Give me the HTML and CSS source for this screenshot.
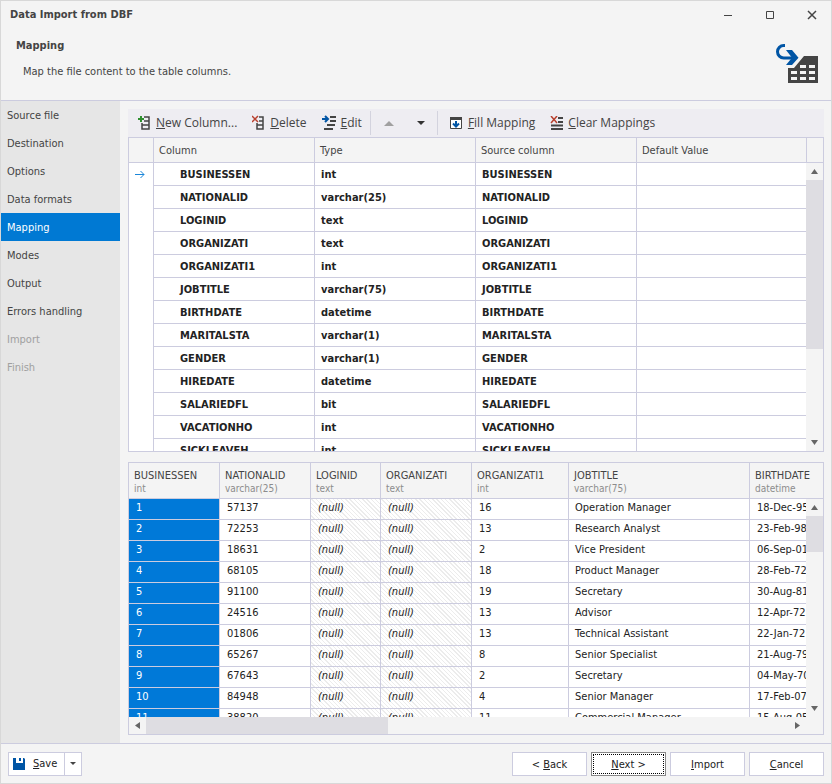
FILE: index.html
```
<!DOCTYPE html>
<html lang="en">
<head>
    <meta charset="UTF-8">
    <meta name="viewport" content="width=device-width, initial-scale=1.0">
    <title>Data Import from DBF</title>
    <link rel="stylesheet" href="styles.css">
</head>
<body>
<div class="window">
    <header class="head">
        <div class="titlebar">
            <h1>Data Import from DBF</h1>
            <div class="win-buttons">
                <button type="button" aria-label="Minimize"><svg width="10" height="10"><path d="M1 5.500h8" stroke="#444" fill="none"/></svg></button>
                <button type="button" aria-label="Maximize"><svg width="10" height="10"><path d="M1.500 1.500h7v7h-7z" stroke="#444" fill="none"/></svg></button>
                <button type="button" aria-label="Close"><svg width="10" height="10"><path d="M1 1l8 8M9 1l-8 8" stroke="#444" stroke-width="1.500" fill="none"/></svg></button>
            </div>
        </div>
        <div class="intro">
            <div class="intro-text">
                <h2>Mapping</h2>
                <p>Map the file content to the table columns.</p>
            </div>
            <svg class="intro-icon" width="42" height="40" viewBox="0 0 42 40">
                <path fill="#444" d="M12 24h6l10-12h14v27H12z"/>
                <path fill="#f4f4f4" d="M24 21h6v3h-6zM33 21h6v3h-6zM15 27h6v3h-6zM24 27h6v3h-6zM33 27h6v3h-6zM15 33h6v3h-6zM24 33h6v3h-6zM33 33h6v3h-6z"/>
                <path fill="none" stroke="#0055a5" stroke-width="3" d="M9 1.500H7.700a6.200 6.200 0 0 0 0 12.400H18"/>
                <path fill="#0055a5" d="M10 6h6l6.500 7.700L16 21h-6l6-7.300z"/>
            </svg>
        </div>
    </header>

    <div class="main">
        <nav class="steps">
            <a href="#">Source file</a>
            <a href="#">Destination</a>
            <a href="#">Options</a>
            <a href="#">Data formats</a>
            <a href="#" class="active">Mapping</a>
            <a href="#">Modes</a>
            <a href="#">Output</a>
            <a href="#">Errors handling</a>
            <a href="#" class="off">Import</a>
            <a href="#" class="off">Finish</a>
        </nav>

        <div class="content">
            <div class="toolbar">
                <button type="button" class="tool">
                    <svg width="13" height="16"><path fill="none" stroke="#444" stroke-width="1.500" d="M6 2h5v12H4V8M4 10h7M6 6h5"/><path stroke="#2f8f2f" stroke-width="2" d="M0 4h6M3 1v6"/></svg>
                    <span><u>N</u>ew Column...</span>
                </button>
                <button type="button" class="tool">
                    <svg width="13" height="16"><path fill="none" stroke="#444" stroke-width="1.500" d="M7 2h4v12H5V8M5 10h6M7 6h4"/><path stroke="#b8402e" stroke-width="1.500" d="M0 1l6 6M6 1L0 7"/></svg>
                    <span><u>D</u>elete</span>
                </button>
                <button type="button" class="tool tool-edit">
                    <svg width="14" height="16"><path stroke="#444" stroke-width="2" d="M8 2h6M8 6h6M5 10h8M2 14h9"/><path fill="none" stroke="#0055a5" stroke-width="2" d="M0 4h6M3 1l3 3-3 3"/></svg>
                    <span><u>E</u>dit</span>
                </button>
                <i class="sep"></i>
                <button type="button" class="tool move" aria-label="Move up" disabled><svg width="10" height="5"><path fill="#a0a0a0" d="M0 5l5-5 5 5z"/></svg></button>
                <button type="button" class="tool move" aria-label="Move down"><svg width="8" height="4"><path fill="#333" d="M0 0h8L4 4z"/></svg></button>
                <i class="sep"></i>
                <button type="button" class="tool tool-fill">
                    <svg width="13" height="14"><path fill="#fff" stroke="#444" d="M.5 1.500h11v11H.5z"/><path fill="#444" d="M0 1h12v3H0z"/><path fill="none" stroke="#0055a5" stroke-width="2" d="M6 5v5M3 7.500l3 3 3-3"/></svg>
                    <span><u>F</u>ill Mapping</span>
                </button>
                <button type="button" class="tool">
                    <svg width="13" height="14"><path stroke="#444" stroke-width="2" d="M8 2h5M8 6h5M1 9.500h12M1 13h12"/><path stroke="#b8402e" stroke-width="1.500" d="M1 0l6 7M7 0L1 7"/></svg>
                    <span><u>C</u>lear Mappings</span>
                </button>
            </div>

            <div class="grid grid-map">
                <table>
                    <colgroup><col class="w25"><col class="w161"><col class="w161"><col class="w161"><col><col class="w16"></colgroup>
                    <thead>
                        <tr><th></th><th>Column</th><th>Type</th><th>Source column</th><th>Default Value</th><th></th></tr>
                    </thead>
                    <tbody>
                        <tr><td><svg width="10" height="9"><path fill="none" stroke="#1a86d9" d="M0 4.500h9M5.500 1l3.500 3.500L5.500 8"/></svg></td><td>BUSINESSEN</td><td>int</td><td>BUSINESSEN</td><td></td><td></td></tr>
                        <tr><td></td><td>NATIONALID</td><td>varchar(25)</td><td>NATIONALID</td><td></td><td></td></tr>
                        <tr><td></td><td>LOGINID</td><td>text</td><td>LOGINID</td><td></td><td></td></tr>
                        <tr><td></td><td>ORGANIZATI</td><td>text</td><td>ORGANIZATI</td><td></td><td></td></tr>
                        <tr><td></td><td>ORGANIZATI1</td><td>int</td><td>ORGANIZATI1</td><td></td><td></td></tr>
                        <tr><td></td><td>JOBTITLE</td><td>varchar(75)</td><td>JOBTITLE</td><td></td><td></td></tr>
                        <tr><td></td><td>BIRTHDATE</td><td>datetime</td><td>BIRTHDATE</td><td></td><td></td></tr>
                        <tr><td></td><td>MARITALSTA</td><td>varchar(1)</td><td>MARITALSTA</td><td></td><td></td></tr>
                        <tr><td></td><td>GENDER</td><td>varchar(1)</td><td>GENDER</td><td></td><td></td></tr>
                        <tr><td></td><td>HIREDATE</td><td>datetime</td><td>HIREDATE</td><td></td><td></td></tr>
                        <tr><td></td><td>SALARIEDFL</td><td>bit</td><td>SALARIEDFL</td><td></td><td></td></tr>
                        <tr><td></td><td>VACATIONHO</td><td>int</td><td>VACATIONHO</td><td></td><td></td></tr>
                        <tr><td></td><td>SICKLEAVEH</td><td>int</td><td>SICKLEAVEH</td><td></td><td></td></tr>
                    </tbody>
                </table>
                <div class="vscroll">
                    <svg width="17" height="17"><path fill="#666" d="M5 11l3.500-5 3.500 5z"/></svg>
                    <div class="track"><div class="thumb"></div></div>
                    <svg width="17" height="17"><path fill="#666" d="M5 6h7l-3.500 5z"/></svg>
                </div>
            </div>

            <div class="grid grid-data">
                <table>
                    <colgroup><col class="w91"><col class="w91"><col class="w70"><col class="w91"><col class="w97"><col class="w181"><col></colgroup>
                    <thead>
                        <tr>
                            <th>BUSINESSEN<small>int</small></th>
                            <th>NATIONALID<small>varchar(25)</small></th>
                            <th>LOGINID<small>text</small></th>
                            <th>ORGANIZATI<small>text</small></th>
                            <th>ORGANIZATI1<small>int</small></th>
                            <th>JOBTITLE<small>varchar(75)</small></th>
                            <th>BIRTHDATE<small>datetime</small></th>
                        </tr>
                    </thead>
                    <tbody>
                        <tr><td>1</td><td>57137</td><td class="null">(null)</td><td class="null">(null)</td><td>16</td><td>Operation Manager</td><td>18-Dec-95</td></tr>
                        <tr><td>2</td><td>72253</td><td class="null">(null)</td><td class="null">(null)</td><td>13</td><td>Research Analyst</td><td>23-Feb-98</td></tr>
                        <tr><td>3</td><td>18631</td><td class="null">(null)</td><td class="null">(null)</td><td>2</td><td>Vice President</td><td>06-Sep-01</td></tr>
                        <tr><td>4</td><td>68105</td><td class="null">(null)</td><td class="null">(null)</td><td>18</td><td>Product Manager</td><td>28-Feb-72</td></tr>
                        <tr><td>5</td><td>91100</td><td class="null">(null)</td><td class="null">(null)</td><td>19</td><td>Secretary</td><td>30-Aug-81</td></tr>
                        <tr><td>6</td><td>24516</td><td class="null">(null)</td><td class="null">(null)</td><td>13</td><td>Advisor</td><td>12-Apr-72</td></tr>
                        <tr><td>7</td><td>01806</td><td class="null">(null)</td><td class="null">(null)</td><td>13</td><td>Technical Assistant</td><td>22-Jan-72</td></tr>
                        <tr><td>8</td><td>65267</td><td class="null">(null)</td><td class="null">(null)</td><td>8</td><td>Senior Specialist</td><td>21-Aug-79</td></tr>
                        <tr><td>9</td><td>67643</td><td class="null">(null)</td><td class="null">(null)</td><td>2</td><td>Secretary</td><td>04-May-70</td></tr>
                        <tr><td>10</td><td>84948</td><td class="null">(null)</td><td class="null">(null)</td><td>4</td><td>Senior Manager</td><td>17-Feb-07</td></tr>
                        <tr><td>11</td><td>38820</td><td class="null">(null)</td><td class="null">(null)</td><td>11</td><td>Commercial Manager</td><td>15-Aug-05</td></tr>
                    </tbody>
                </table>
                <div class="vscroll">
                    <svg width="17" height="17"><path fill="#666" d="M5 11l3.500-5 3.500 5z"/></svg>
                    <div class="track"><div class="thumb"></div></div>
                    <svg width="17" height="17"><path fill="#666" d="M5 6h7l-3.500 5z"/></svg>
                </div>
                <div class="hscroll">
                    <svg width="17" height="17"><path fill="#666" d="M11 5v7L6 8.500z"/></svg>
                    <div class="track"><div class="thumb"></div></div>
                    <svg width="17" height="17"><path fill="#666" d="M6 5v7l5-3.500z"/></svg>
                </div>
            </div>
        </div>
    </div>

    <footer class="foot">
        <div class="save">
            <button type="button" class="save-main">
                <svg width="12" height="12"><path fill="#0055a5" d="M0 0h3v5h7V0h1l1 1v11H0z"/><path fill="#0055a5" d="M6 0h2v3H6z"/></svg>
                <span><u>S</u>ave</span>
            </button>
            <button type="button" class="save-more" aria-label="Save options"><svg width="6" height="3"><path fill="#444" d="M0 0h6L3 3z"/></svg></button>
        </div>
        <div class="actions">
            <button type="button" class="btn">&lt; <u>B</u>ack</button>
            <button type="button" class="btn default"><u>N</u>ext &gt;</button>
            <button type="button" class="btn"><u>I</u>mport</button>
            <button type="button" class="btn"><u>C</u>ancel</button>
        </div>
    </footer>
</div>
</body>
</html>
```

FILE: styles.css
```
*{
    margin: 0;
    padding: 0;
    box-sizing: border-box;
}
body, button{
    font-family: "DejaVu Sans Condensed", "Noto Sans", sans-serif;
    font-size: 11px;
    line-height: 14px;
    color: #444;
}
button{
    background: none;
    border: none;
}
svg{
    display: block;
    flex: none;
}
.window{
    height: 100vh;
    display: flex;
    flex-direction: column;
    background: #f4f4f4;
    border: 1px solid #d8d8d8;
}

/* header */
.head{
    height: 100px;
    flex: none;
    border-bottom: 1px solid #ccccdf;
}
.titlebar{
    display: flex;
    justify-content: space-between;
    align-items: center;
    height: 28px;
    padding: 0 9px;
}
h1, h2{
    font-size: 11px;
    line-height: 14px;
}
.win-buttons{
    display: flex;
    gap: 22px;
}
.win-buttons button{
    width: 20px;
    height: 20px;
    padding: 5px;
}
.intro{
    display: flex;
    justify-content: space-between;
    padding: 10px 13px 0 15px;
}
.intro-text p{
    margin: 12px 0 0 7px;
}
.intro-icon{
    margin-top: 5px;
}

/* steps on the left */
.main{
    flex: 1;
    min-height: 0;
    display: flex;
}
.steps{
    width: 119px;
    flex: none;
    background: #e6e6e6;
}
.steps a{
    display: block;
    height: 28px;
    line-height: 30px;
    padding-left: 6px;
    color: #444;
    text-decoration: none;
}
.steps a.active{
    background: #0079d3;
    color: #fff;
}
.steps a.off{
    color: #a0a0a0;
}

.content{
    flex: 1;
    min-width: 0;
    display: flex;
    flex-direction: column;
    padding: 8px 7px 8px 8px;
}
.toolbar{
    height: 28px;
    flex: none;
    display: flex;
    align-items: center;
    padding-left: 10px;
    background: #eeedf2;
}
.tool{
    display: flex;
    align-items: center;
    gap: 5px;
    margin-right: 15px;
    font-family: "Open Sans", "Noto Sans", sans-serif;
    font-size: 12px;
    line-height: 16px;
    white-space: nowrap;
}
.tool-edit{
    margin-right: 8px;
}
.move{
    width: 32px;
    justify-content: center;
    margin: 0;
}
.sep{
    width: 1px;
    height: 24px;
    margin-right: 2px;
    background: #d3d3de;
}
.sep + .tool-fill{
    margin-left: 10px;
}

/* grids */
.grid{
    position: relative;
    overflow: hidden;
    background: #fff;
    border: 1px solid #ccccdf;
}
.grid-map{
    flex: 315 1 0;
}
.grid-data{
    flex: 273 1 0;
    margin-top: 10px;
}
table{
    width: 100%;
    table-layout: fixed;
    border-spacing: 0;
}
.w16{ width: 16px; }
.w25{ width: 25px; }
.w70{ width: 70px; }
.w91{ width: 91px; }
.w97{ width: 97px; }
.w161{ width: 161px; }
.w181{ width: 181px; }
th, td{
    overflow: hidden;
    white-space: nowrap;
    text-align: left;
    border-right: 1px solid #ccccdf;
    border-bottom: 1px solid #ccccdf;
}
th{
    font-weight: normal;
    background: #f4f4f4;
}
th:last-child, td:last-child{
    border-right: none;
}
.grid-map th{
    height: 25px;
    padding: 2px 0 0 5px;
}
.grid-map td{
    height: 23px;
    padding: 2px 0 0 6px;
    font-weight: bold;
    color: #222;
}
.grid-map td:first-child{
    padding-top: 0;
    border-bottom: none;
}
.grid-map td:nth-child(2){
    padding-left: 26px;
}
.grid-data th{
    height: 36px;
    padding: 6px 0 0 5px;
    vertical-align: top;
}
.grid-data small{
    display: block;
    font-size: 10px;
    line-height: 11px;
    color: #8c8c8c;
}
.grid-data td{
    height: 21px;
    padding: 0 0 2px 7px;
    color: #222;
}
.grid-data td:nth-child(6){
    padding-left: 6px;
}
.grid-data td:first-child{
    background: #0079d8;
    background-clip: padding-box;
    color: #fff;
}
.grid-data td.null{
    font-style: italic;
    background: repeating-linear-gradient(45deg, #fff 0, #fff 2px, #ececec 2px, #ececec 3px);
}

/* scrollbars */
.vscroll{
    position: absolute;
    top: 25px;
    right: 0;
    bottom: 0;
    width: 17px;
    display: flex;
    flex-direction: column;
    background: #f4f4f4;
}
.grid-data .vscroll{
    top: 36px;
    bottom: 17px;
}
.hscroll{
    position: absolute;
    left: 0;
    right: 0;
    bottom: 0;
    height: 17px;
    display: flex;
    padding-right: 17px;
    background: #f4f4f4;
}
.track{
    flex: 1;
}
.thumb{
    height: 169px;
    background: #dedde2;
}
.grid-data .vscroll .thumb{
    height: 36px;
}
.hscroll .thumb{
    width: 242px;
    height: 17px;
}

/* footer */
.foot{
    height: 40px;
    flex: none;
    display: flex;
    justify-content: space-between;
    align-items: center;
    padding: 0 7px;
    border-top: 1px solid #ccccdf;
}
.save{
    display: flex;
    height: 24px;
    background: #fff;
    border: 1px solid #ccccdf;
}
.save button{
    display: flex;
    align-items: center;
    color: #222;
}
.save-main{
    gap: 8px;
    padding: 0 7px 0 4px;
}
.save-more{
    padding: 0 5px;
    border-left: 1px solid #ccccdf;
}
.actions{
    display: flex;
    gap: 4px;
}
.btn{
    width: 75px;
    height: 24px;
    padding-top: 2px;
    background: #fff;
    border: 1px solid #ccccdf;
    color: #222;
}
.btn.default{
    border-color: #888;
    outline: 1px dotted #000;
    outline-offset: -3px;
}
```
